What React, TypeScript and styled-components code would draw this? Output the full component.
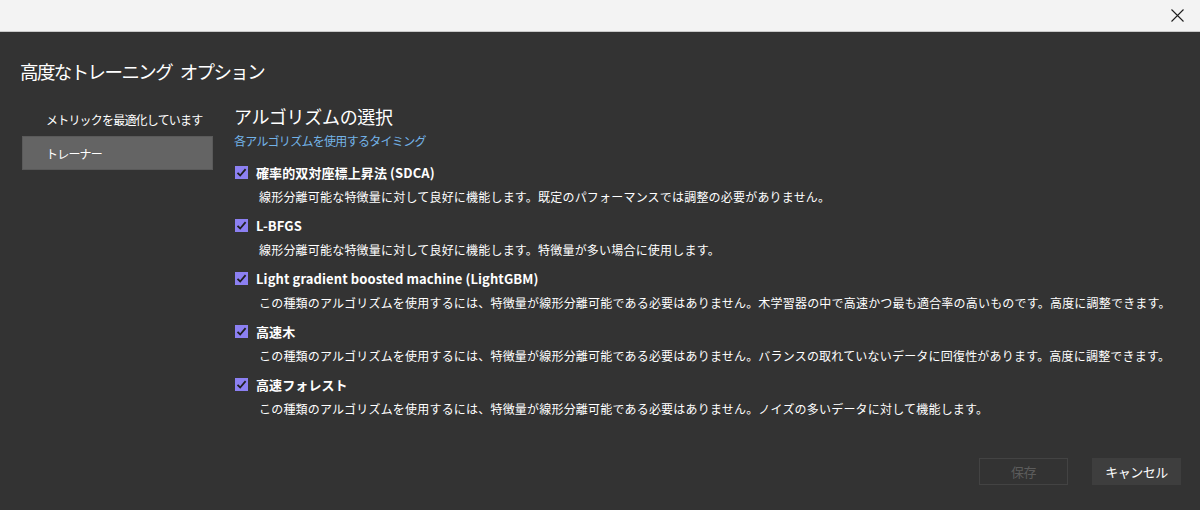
import React from 'react';
import styled, {createGlobalStyle} from 'styled-components';

const GlobalStyle = createGlobalStyle`
  html, body {
    margin: 0;
    padding: 0;
    background: #333333;
  }
  body {
    font-family: "Noto Sans CJK JP", "Noto Sans", sans-serif;
    color: #ffffff;
  }
`;

const Page = styled.div`
  display: flex;
  flex-direction: column;
  width: 1200px;
  height: 510px;
  background: #333333;
  overflow: hidden;
`;

const TitleBar = styled.div`
  display: flex;
  justify-content: flex-end;
  align-items: center;
  height: 31px;
  background: #f3f3f3;
  border-bottom: 1px solid #c9c9c9;
  padding-right: 8px;
`;

const CloseButton = styled.button`
  display: flex;
  align-items: center;
  justify-content: center;
  width: 30px;
  height: 30px;
  padding: 0;
  border: none;
  background: transparent;
  color: #1e1e1e;
`;

const Body = styled.div`
  flex: 1;
  display: flex;
  flex-direction: column;
  padding: 27px 19px 25px 20px;
`;

const DialogTitle = styled.h1`
  margin: 0;
  font-size: 18.5px;
  line-height: 24px;
  font-weight: 400;
  letter-spacing: -1.6px;
  word-spacing: 5px;
  color: #ffffff;
`;

const Content = styled.div`
  flex: 1;
  display: grid;
  grid-template-columns: 191px 1fr;
  column-gap: 21px;
  margin-top: 19px;
  padding-left: 2px;
`;

const Nav = styled.nav`
  display: flex;
  flex-direction: column;
`;

const NavItem = styled.div<{selected?: boolean}>`
  height: 34px;
  display: flex;
  align-items: center;
  padding-left: 23px;
  font-size: 12px;
  letter-spacing: -0.8px;
  color: #ffffff;
  box-sizing: border-box;
  background: ${({selected}) => (selected ? '#646464' : 'transparent')};
  border: 1px solid ${({selected}) => (selected ? '#5a5a5a' : 'transparent')};
`;

const Main = styled.section`
  display: flex;
  flex-direction: column;
`;

const Heading = styled.h2`
  margin: 0;
  font-size: 18px;
  line-height: 28px;
  font-weight: 400;
  letter-spacing: -0.3px;
`;

const SubLink = styled.a`
  margin-top: 2px;
  font-size: 12px;
  line-height: 18px;
  letter-spacing: -0.7px;
  color: #73b3e8;
  text-decoration: none;
`;

const AlgoList = styled.div`
  display: flex;
  flex-direction: column;
  gap: 8px;
  margin-top: 12px;
`;

const AlgoItem = styled.div`
  display: flex;
  flex-direction: column;
  gap: 5px;
`;

const AlgoLabel = styled.label`
  display: flex;
  align-items: center;
  gap: 8px;
  height: 20px;
  padding-left: 1px;
  font-size: 13px;
  font-weight: 700;
  letter-spacing: 0.1px;
`;

const Box = styled.span`
  display: flex;
  align-items: center;
  justify-content: center;
  width: 13px;
  height: 13px;
  background: #8c80f2;
  flex-shrink: 0;
`;

const AlgoDesc = styled.p`
  margin: 0;
  padding-left: 25px;
  font-size: 12px;
  line-height: 20px;
  letter-spacing: 0.2px;
  color: #ffffff;
  white-space: nowrap;
`;

const Footer = styled.div`
  display: flex;
  justify-content: flex-end;
  gap: 24px;
`;

const Button = styled.button<{disabled?: boolean}>`
  width: 89px;
  height: 27px;
  box-sizing: border-box;
  font-family: "Noto Sans CJK JP", sans-serif;
  font-size: 13px;
  letter-spacing: -0.5px;
  border: 1px solid ${({disabled}) => (disabled ? '#434343' : '#3e3e3e')};
  background: ${({disabled}) => (disabled ? 'transparent' : '#3e3e3e')};
  color: ${({disabled}) => (disabled ? '#5c5c5c' : '#ffffff')};
  padding: 0;
`;

const Check = () => (
  <svg width="11" height="11" viewBox="0 0 11 11">
    <polyline points="1.5,5.8 4.2,8.5 9.6,2.2" fill="none" stroke="#1f1f1f" strokeWidth="1.8" />
  </svg>
);

const algorithms = [
  {
    name: '確率的双対座標上昇法 (SDCA)',
    desc: '線形分離可能な特徴量に対して良好に機能します。既定のパフォーマンスでは調整の必要がありません。',
  },
  {
    name: 'L-BFGS',
    desc: '線形分離可能な特徴量に対して良好に機能します。特徴量が多い場合に使用します。',
  },
  {
    name: 'Light gradient boosted machine (LightGBM)',
    desc: 'この種類のアルゴリズムを使用するには、特徴量が線形分離可能である必要はありません。木学習器の中で高速かつ最も適合率の高いものです。高度に調整できます。',
  },
  {
    name: '高速木',
    desc: 'この種類のアルゴリズムを使用するには、特徴量が線形分離可能である必要はありません。バランスの取れていないデータに回復性があります。高度に調整できます。',
  },
  {
    name: '高速フォレスト',
    desc: 'この種類のアルゴリズムを使用するには、特徴量が線形分離可能である必要はありません。ノイズの多いデータに対して機能します。',
  },
];

export default function App() {
  return (
    <Page>
      <GlobalStyle />
      <TitleBar>
        <CloseButton aria-label="閉じる">
          <svg width="13" height="13" viewBox="0 0 13 13">
            <path d="M0.5 0.5 L12.5 12.5 M12.5 0.5 L0.5 12.5" stroke="#1e1e1e" strokeWidth="1.1" />
          </svg>
        </CloseButton>
      </TitleBar>
      <Body>
        <DialogTitle>高度なトレーニング オプション</DialogTitle>
        <Content>
          <Nav>
            <NavItem>メトリックを最適化しています</NavItem>
            <NavItem selected>トレーナー</NavItem>
          </Nav>
          <Main>
            <Heading>アルゴリズムの選択</Heading>
            <SubLink href="#">各アルゴリズムを使用するタイミング</SubLink>
            <AlgoList>
              {algorithms.map((a) => (
                <AlgoItem key={a.name}>
                  <AlgoLabel>
                    <Box>
                      <Check />
                    </Box>
                    {a.name}
                  </AlgoLabel>
                  <AlgoDesc>{a.desc}</AlgoDesc>
                </AlgoItem>
              ))}
            </AlgoList>
          </Main>
        </Content>
        <Footer>
          <Button disabled>保存</Button>
          <Button>キャンセル</Button>
        </Footer>
      </Body>
    </Page>
  );
}
